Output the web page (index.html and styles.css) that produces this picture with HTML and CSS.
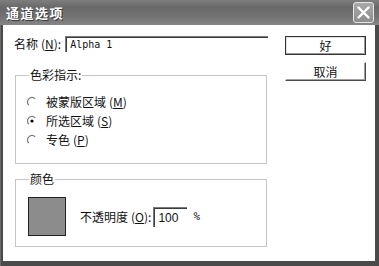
FILE: index.html
```html
<!DOCTYPE html>
<html lang="zh-CN">

<head>
    <meta charset="UTF-8">
    <meta name="viewport" content="width=device-width, initial-scale=1.0">
    <title>通道选项</title>
    <link rel="stylesheet" href="styles.css">
</head>

<body>
    <div class="dialog">
        <div class="titlebar">
            <span class="title">通道选项</span>
            <button class="close">
                <svg width="13" height="13" viewBox="0 0 13 13">
                    <path d="M1.5 1.5 L11.5 11.5 M11.5 1.5 L1.5 11.5" stroke="#fff" stroke-width="2.4" stroke-linecap="round" />
                </svg>
            </button>
        </div>

        <div class="client">
            <div class="main">
                <div class="name-row">
                    <span class="label">名称<span class="key">(<u>N</u>)</span>:</span>
                    <div class="field name-field">Alpha 1</div>
                </div>

                <fieldset class="group">
                    <legend>色彩指示:</legend>
                    <div class="radio-list">
                        <div class="radio">
                            <svg width="12" height="12" viewBox="0 0 12 12">
                                <path d="M1.8 9.2 A4.5 4.5 0 0 1 8.2 2.8" fill="none" stroke="#7a7a7a" stroke-width="1.2" />
                            </svg>
                            <span>被蒙版区域<span class="key">(<u>M</u>)</span></span>
                        </div>
                        <div class="radio">
                            <svg width="12" height="12" viewBox="0 0 12 12">
                                <path d="M1.8 9.2 A4.5 4.5 0 0 1 8.2 2.8" fill="none" stroke="#7a7a7a" stroke-width="1.2" />
                                <circle cx="5" cy="6" r="1.6" fill="#000" />
                            </svg>
                            <span>所选区域<span class="key">(<u>S</u>)</span></span>
                        </div>
                        <div class="radio">
                            <svg width="12" height="12" viewBox="0 0 12 12">
                                <path d="M1.8 9.2 A4.5 4.5 0 0 1 8.2 2.8" fill="none" stroke="#7a7a7a" stroke-width="1.2" />
                            </svg>
                            <span>专色<span class="key">(<u>P</u>)</span></span>
                        </div>
                    </div>
                </fieldset>

                <fieldset class="group color-group">
                    <legend>颜色</legend>
                    <div class="color-row">
                        <div class="swatch"></div>
                        <span class="label">不透明度<span class="key">(<u>O</u>)</span>:</span>
                        <div class="field opacity-field">100</div>
                        <span class="percent">%</span>
                    </div>
                </fieldset>
            </div>

            <div class="buttons">
                <button class="btn default">好</button>
                <button class="btn">取消</button>
            </div>
        </div>
    </div>
</body>

</html>
```

FILE: styles.css
```css
* {
    margin: 0;
    padding: 0;
    box-sizing: border-box;
}

body {
    font-family: "Noto Sans CJK SC", "Noto Sans", sans-serif;
    font-size: 12px;
    line-height: 14px;
    color: #111;
}

.dialog {
    width: 379px;
    height: 266px;
    display: flex;
    flex-direction: column;
    background-color: #4a4a4a;
    border-left: 1px solid #6a6a6a;
}

.titlebar {
    height: 25px;
    display: flex;
    align-items: center;
    justify-content: space-between;
    padding: 0 5px 0 6px;
    margin-left: -1px;
    background: linear-gradient(to bottom, #7e7e7e, #686868 30%, #747474 70%, #868686);
}

.title {
    color: #fff;
    font-weight: bold;
    font-size: 13px;
    letter-spacing: 1.5px;
    text-shadow: 1px 1px 0 #3a3a3a;
}

.close {
    width: 21px;
    height: 21px;
    display: flex;
    align-items: center;
    justify-content: center;
    border: 1px solid #e6e6e6;
    border-radius: 3px;
    background: linear-gradient(to bottom, #a8a8a8, #8e8e8e);
}

.client {
    flex: 1;
    display: flex;
    gap: 17px;
    margin: 0 4px 5px 2px;
    padding: 11px 9px 0 11px;
    background-color: #fff;
}

.main {
    width: 254px;
}

.key {
    margin-left: 3px;
}

.name-row {
    display: flex;
    align-items: center;
    gap: 4px;
    height: 16px;
}

.field {
    height: 16px;
    border-top: 1px solid #7a7a7a;
    border-left: 1px solid #7a7a7a;
    box-shadow: inset 1px 1px 0 #3c3c3c;
    padding: 1px 0 0 4px;
}

.name-field {
    flex: 1;
    font-family: "DejaVu Sans Mono", "Liberation Mono", monospace;
    font-size: 10px;
    line-height: 14px;
}

.group {
    margin: 16px 1px 0;
    border: 1px solid #c6c6c6;
    padding: 0 13px 14px 11px;
    min-inline-size: 0;
}

.group legend {
    margin-left: 2px;
    padding: 0 1px;
    line-height: 14px;
}

.radio-list {
    margin-top: 10px;
    display: flex;
    flex-direction: column;
}

.radio {
    height: 19px;
    display: flex;
    align-items: center;
    gap: 7px;
}

.color-group {
    margin-top: 8px;
    padding-bottom: 10px;
}

.color-row {
    margin-top: 11px;
    display: flex;
    align-items: center;
}

.swatch {
    width: 38px;
    height: 39px;
    margin-left: 1px;
    margin-right: 14px;
    border: 1px solid #222;
    background-color: #8c8c8c;
}

.opacity-field {
    width: 34px;
    height: 20px;
    margin-left: 2px;
    padding-top: 3px;
    font-family: "Liberation Sans", sans-serif;
}

.percent {
    margin-left: 6px;
    font-family: "DejaVu Sans Mono", monospace;
    font-size: 11px;
}

.buttons {
    width: 81px;
    display: flex;
    flex-direction: column;
    gap: 7px;
}

.btn {
    height: 19px;
    font-family: "Noto Sans CJK SC", sans-serif;
    font-size: 12px;
    line-height: 14px;
    color: #111;
    background-color: #fff;
    border: 1px solid;
    border-color: #fff #4a4a4a #4a4a4a #fff;
    box-shadow: inset -1px -1px 0 #a0a0a0;
}

.btn.default {
    border-color: #333;
    box-shadow: inset -1px -1px 0 #9a9a9a, inset 1px 1px 0 #e0e0e0;
}
```
